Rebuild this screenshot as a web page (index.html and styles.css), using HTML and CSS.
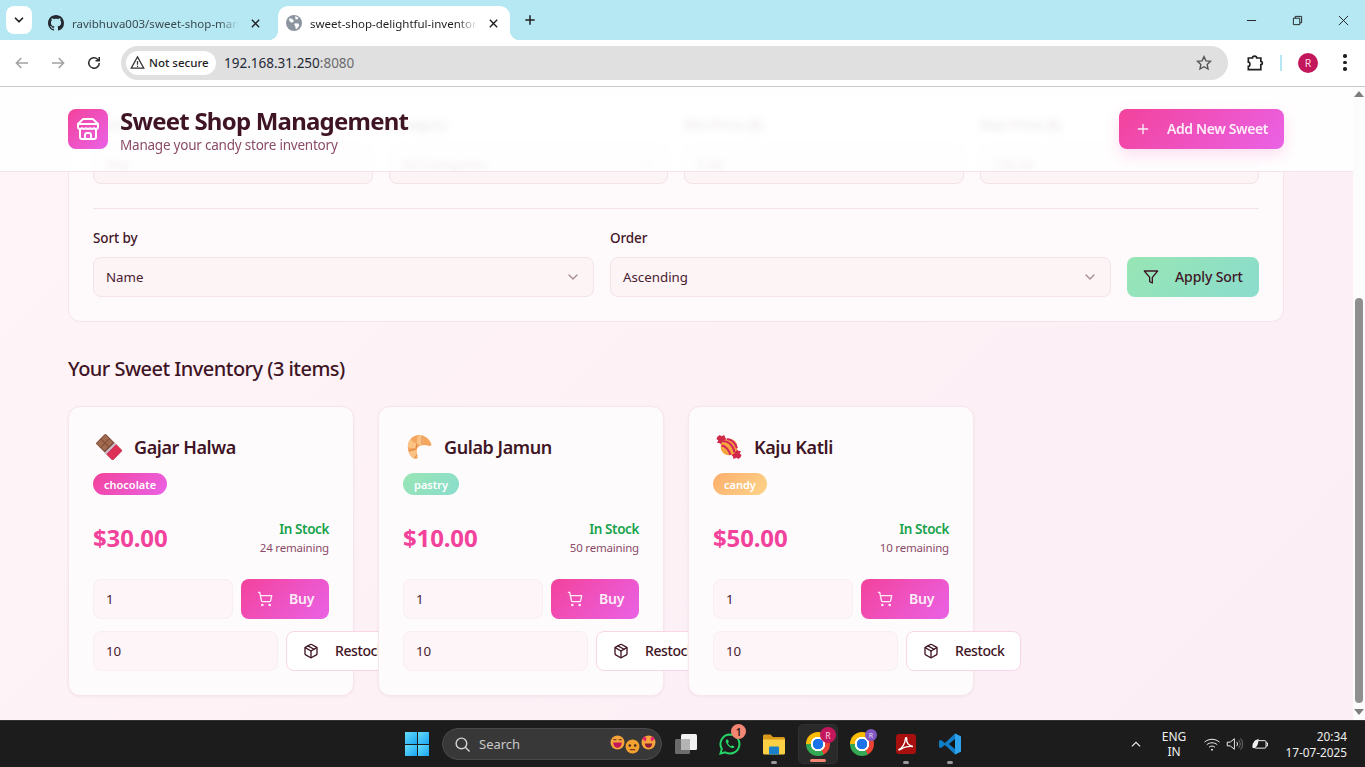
FILE: index.html
```html
<!DOCTYPE html>
<html lang="en">
<head>
<meta charset="utf-8">
<title>Sweet Shop Management</title>
<link rel="stylesheet" href="styles.css">
</head>
<body>
<svg class="defs" width="0" height="0" aria-hidden="true">
  <symbol id="i-plus" viewBox="0 0 24 24"><path d="M5 12h14M12 5v14"/></symbol>
  <symbol id="i-chev" viewBox="0 0 24 24"><path d="m6 9 6 6 6-6"/></symbol>
  <symbol id="i-filter" viewBox="0 0 24 24"><path d="M22 3H2l8 9.460V19l4 2v-8.540z"/></symbol>
  <symbol id="i-cart" viewBox="0 0 24 24"><circle cx="8" cy="21" r="1"/><circle cx="19" cy="21" r="1"/><path d="M2.050 2.050h2l2.660 12.420a2 2 0 0 0 2 1.580h9.780a2 2 0 0 0 1.950-1.570l1.650-7.430H5.120"/></symbol>
  <symbol id="i-box" viewBox="0 0 24 24"><path d="M11 21.730a2 2 0 0 0 2 0l7-4A2 2 0 0 0 21 16V8a2 2 0 0 0-1-1.730l-7-4a2 2 0 0 0-2 0l-7 4A2 2 0 0 0 3 8v8a2 2 0 0 0 1 1.730z"/><path d="M12 22V12"/><path d="m3.300 7 8.700 5 8.700-5"/><path d="m7.500 4.270 9 5.150"/></symbol>
  <symbol id="i-close" viewBox="0 0 12 12"><path d="M2 2l8 8M10 2l-8 8"/></symbol>
</svg>

<div class="screen">
  <header class="tabstrip">
    <button class="tabmenu"><svg class="ico10 stroke-dark" viewBox="0 0 24 24"><use href="#i-chev"/></svg></button>
    <div class="tab first">
      <svg class="fav" viewBox="0 0 16 16"><path fill="#24292f" d="M8 0C3.580 0 0 3.580 0 8c0 3.540 2.290 6.530 5.470 7.590.4.070.55-.17.55-.38 0-.19-.01-.82-.01-1.490-2.010.37-2.530-.49-2.690-.94-.09-.23-.48-.94-.82-1.130-.28-.15-.68-.52-.01-.53.63-.01 1.080.58 1.230.82.72 1.210 1.870.87 2.330.66.07-.52.28-.87.51-1.070-1.780-.2-3.640-.89-3.640-3.950 0-.87.31-1.590.82-2.150-.08-.2-.36-1.020.08-2.120 0 0 .67-.21 2.200.82.64-.18 1.320-.27 2-.27.68 0 1.360.09 2 .27 1.530-1.040 2.200-.82 2.200-.82.44 1.100.16 1.920.08 2.120.51.56.82 1.270.82 2.150 0 3.070-1.870 3.750-3.650 3.950.29.25.54.73.54 1.480 0 1.070-.01 1.930-.01 2.200 0 .21.15.46.55.38A8.013 8.013 0 0016 8c0-4.420-3.580-8-8-8z"/></svg>
      <span class="tabtext">ravibhuva003/sweet-shop-management</span>
      <svg class="tabx" viewBox="0 0 12 12"><use href="#i-close"/></svg>
    </div>
    <div class="tab active">
      <svg class="fav" viewBox="0 0 16 16"><circle cx="8" cy="8" r="8" fill="#8c959f"/><path fill="#fff" d="M3 3.200l3 .6 1.800 1.800-.6 1.600-2 .4L3.400 6zM9 1.200l3.400 1.400-.8 1.600-2 .2zM9 8.200l3.600.4.6 2.200-2.400 3.200-1.200-.4-.4-2.600-1-1.400z"/></svg>
      <span class="tabtext">sweet-shop-delightful-inventory</span>
      <svg class="tabx" viewBox="0 0 12 12"><use href="#i-close"/></svg>
    </div>
    <svg class="newtab" viewBox="0 0 24 24"><use href="#i-plus"/></svg>
    <div class="winctl">
      <svg class="wc" viewBox="0 0 12 12"><path d="M1 6h10"/></svg>
      <svg class="wc" viewBox="0 0 12 12"><path d="M1.500 3.500h7v7h-7zM3.500 3.500v-2h7v7h-2"/></svg>
      <svg class="wc" viewBox="0 0 12 12"><path d="M1 1l10 10M11 1L1 11"/></svg>
    </div>
  </header>

  <nav class="toolbar">
    <svg class="tb dim" viewBox="0 0 24 24"><path d="M20 12H5M11 5.500L4.500 12l6.500 6.500"/></svg>
    <svg class="tb dim" viewBox="0 0 24 24"><path d="M4 12h15M13 5.500l6.500 6.500-6.500 6.500"/></svg>
    <svg class="tb" viewBox="0 0 24 24"><path d="M19 12a7 7 0 1 1-2.200-5.100L19 9M19 4v5h-5"/></svg>
    <div class="omnibox">
      <div class="chip">
        <svg class="warn" viewBox="0 0 16 16"><path d="M8 2L1.300 14h13.400z"/><path d="M8 6.500v4M8 11.500v1.200"/></svg>
        <span>Not secure</span>
      </div>
      <span class="url">192.168.31.250<span class="port">:8080</span></span>
      <svg class="star" viewBox="0 0 24 24"><path d="M12 3.500l2.600 5.600 6.100.7-4.500 4.200 1.200 6-5.400-3-5.400 3 1.200-6-4.500-4.200 6.100-.7z"/></svg>
    </div>
    <svg class="ext" viewBox="0 0 24 24"><path d="M5 6h4c0-3 5-3 5 0h5v4c2.500 0 2.500 4 0 4v6H4v-4c2.500 0 2.500-5 0-5V6z"/></svg>
    <span class="tbsep"></span>
    <span class="avatar">R</span>
    <span class="dots"><i></i><i></i><i></i></span>
  </nav>

  <div class="browser">
    <main class="viewport">
      <div class="topbar">
        <div class="brand">
          <span class="logo">
            <svg viewBox="0 0 24 24"><path d="m2 7 4.410-4.410A2 2 0 0 1 7.830 2h8.340a2 2 0 0 1 1.420.590L22 7"/><path d="M4 12v8a2 2 0 0 0 2 2h12a2 2 0 0 0 2-2v-8"/><path d="M15 22v-4a2 2 0 0 0-2-2h-2a2 2 0 0 0-2 2v4"/><path d="M2 7h20"/><path d="M22 7v3a2 2 0 0 1-2 2 2.700 2.700 0 0 1-1.590-.630.700.700 0 0 0-.820 0A2.700 2.700 0 0 1 16 12a2.700 2.700 0 0 1-1.590-.630.700.700 0 0 0-.820 0A2.700 2.700 0 0 1 12 12a2.700 2.700 0 0 1-1.590-.630.700.700 0 0 0-.820 0A2.700 2.700 0 0 1 8 12a2.700 2.700 0 0 1-1.590-.630.700.700 0 0 0-.820 0A2.700 2.700 0 0 1 4 12a2 2 0 0 1-2-2V7"/></svg>
          </span>
          <div class="brandtext">
            <h1>Sweet Shop Management</h1>
            <p>Manage your candy store inventory</p>
          </div>
        </div>
        <button class="btn btn-pink btn-add"><svg class="ico"><use href="#i-plus"/></svg><span>Add New Sweet</span></button>
      </div>

      <div class="content">
        <section class="panel">
          <div class="filters">
            <div class="field"><label>Name</label><div class="control">Any</div></div>
            <div class="field"><label>Category</label><div class="control select"><span>All Categories</span><svg class="ico chev"><use href="#i-chev"/></svg></div></div>
            <div class="field"><label>Min Price ($)</label><div class="control">0.00</div></div>
            <div class="field"><label>Max Price ($)</label><div class="control">100.00</div></div>
          </div>
          <div class="sortrow">
            <div class="field"><label>Sort by</label><div class="control select"><span>Name</span><svg class="ico chev"><use href="#i-chev"/></svg></div></div>
            <div class="field"><label>Order</label><div class="control select"><span>Ascending</span><svg class="ico chev"><use href="#i-chev"/></svg></div></div>
            <button class="btn btn-mint"><svg class="ico"><use href="#i-filter"/></svg><span>Apply Sort</span></button>
          </div>
        </section>

        <h2 class="section-title">Your Sweet Inventory (3 items)</h2>

        <div class="cards">
          <article class="card">
            <div class="card-head">
              <svg class="emoji" viewBox="0 0 28 28"><g transform="rotate(-45 14 14)"><rect x="6.500" y="1" width="15" height="26" rx="1.500" fill="#7d4a35"/><path d="M7.500 2h6v5.500h-6zM14.500 2h6v5.500h-6zM7.500 8.500h6v5h-6zM14.500 8.500h6v5h-6z" fill="#a06a50"/><rect x="6.500" y="15" width="15" height="2.500" fill="#cdbfd0"/><path d="M6.500 17.500h15v8a1.500 1.500 0 0 1-1.500 1.500H8a1.500 1.500 0 0 1-1.500-1.500z" fill="#de2f57"/></g></svg>
              <h3>Gajar Halwa</h3>
            </div>
            <span class="badge badge-pink">chocolate</span>
            <div class="pricerow">
              <span class="price">$30.00</span>
              <div class="stock"><strong>In Stock</strong><small>24 remaining</small></div>
            </div>
            <div class="action"><input class="qty qty-buy" value="1"><button class="btn btn-pink btn-buy"><svg class="ico"><use href="#i-cart"/></svg><span>Buy</span></button></div>
            <div class="action"><input class="qty qty-re" value="10"><button class="btn btn-outline"><svg class="ico"><use href="#i-box"/></svg><span>Restock</span></button></div>
          </article>

          <article class="card">
            <div class="card-head">
              <svg class="emoji" viewBox="0 0 28 28"><path d="M14 1C7 1 2 7 2 14c0 6 3 11 8 13 2 0 3-1 2.500-3-1.500-4-1.500-8 .5-10 2-2 7-3 12-1 2 0 3-1 2-3C25 5 20 1 14 1z" fill="#f4a55e"/><path d="M14 1c-2 2-3 6-2 10l5 1c2-3 2-7 1-10-1.300-.7-2.700-1-4-1zM4.500 6C2.500 8.500 2 11.500 2 14.500l8 1 1-5zM3 19c1 3.500 3.500 6.500 7 8l2-4-1.500-5.500z" fill="#fbc383"/><path d="M11.500 10.500L11 15.500M17.500 2l-.5 9M3 18l7.500-2M9 26l3-4" stroke="#d9824a" stroke-width=".9" fill="none"/></svg>
              <h3>Gulab Jamun</h3>
            </div>
            <span class="badge badge-mint">pastry</span>
            <div class="pricerow">
              <span class="price">$10.00</span>
              <div class="stock"><strong>In Stock</strong><small>50 remaining</small></div>
            </div>
            <div class="action"><input class="qty qty-buy" value="1"><button class="btn btn-pink btn-buy"><svg class="ico"><use href="#i-cart"/></svg><span>Buy</span></button></div>
            <div class="action"><input class="qty qty-re" value="10"><button class="btn btn-outline"><svg class="ico"><use href="#i-box"/></svg><span>Restock</span></button></div>
          </article>

          <article class="card">
            <div class="card-head">
              <svg class="emoji" viewBox="0 0 28 28"><path d="M1.500 3L4 1l2 1.500L9 1l1 3 3 3-6 6-3-3-3-.5L2.500 7 .5 5.500zM26.500 25l-2.500 2-2-1.500-3 1.500-1-3-3-3 6-6 3 3 3 .5-1.500 2.500 2 1.500z" fill="#cf2a4a"/><circle cx="14" cy="14" r="9" fill="#f5a53c"/><path d="M7.500 8c5-1 11 4 12.500 12M6 12.500c4 0 8 4.500 9.500 10M12 5.300c5 .5 9.500 5 10.500 10" stroke="#d4245e" stroke-width="2.200" fill="none"/></svg>
              <h3>Kaju Katli</h3>
            </div>
            <span class="badge badge-orange">candy</span>
            <div class="pricerow">
              <span class="price">$50.00</span>
              <div class="stock"><strong>In Stock</strong><small>10 remaining</small></div>
            </div>
            <div class="action"><input class="qty qty-buy" value="1"><button class="btn btn-pink btn-buy"><svg class="ico"><use href="#i-cart"/></svg><span>Buy</span></button></div>
            <div class="action"><input class="qty qty-re" value="10"><button class="btn btn-outline"><svg class="ico"><use href="#i-box"/></svg><span>Restock</span></button></div>
          </article>
        </div>
      </div>
    </main>
    <aside class="scrollbar">
      <span class="arrow up"></span>
      <span class="thumb"></span>
      <span class="arrow down"></span>
    </aside>
  </div>

  <footer class="taskbar">
    <div class="tb-center">
      <span class="tb-item"><span class="winlogo"><i></i><i></i><i></i><i></i></span></span>
      <div class="search">
        <svg class="searchico" viewBox="0 0 24 24"><circle cx="10.500" cy="10.500" r="7.500"/><path d="M16 16l6 6"/></svg>
        <span>Search</span>
        <span class="faces">
          <svg class="face" viewBox="0 0 14 14"><circle cx="7" cy="7" r="6.500" fill="#f7a53b"/><path d="M3 7h8c0 3-2 5-4 5s-4-2-4-5z" fill="#c2185b"/><path d="M3 4.500h3M8 4.500h3" stroke="#5b2a1c"/></svg>
          <svg class="face low" viewBox="0 0 14 14"><circle cx="7" cy="7" r="6.500" fill="#f4a12f"/><circle cx="4.500" cy="6" r="1.200" fill="#3c2a20"/><circle cx="9.500" cy="6" r="1.200" fill="#3c2a20"/><path d="M4.500 10h5" stroke="#5b2a1c"/></svg>
          <svg class="face" viewBox="0 0 14 14"><circle cx="7" cy="7" r="6.500" fill="#f7a53b"/><path d="M1.500 3c1-2 3-1.500 3.500 0 .5 1-1 3-1 3S2 5 1.500 3zM12.500 3c-1-2-3-1.500-3.500 0-.5 1 1 3 1 3s2-1 2.500-3z" fill="#e8246c"/><path d="M3.500 8h7c0 2.500-2 4-3.500 4s-3.500-1.500-3.500-4z" fill="#8c1d3b"/></svg>
        </span>
      </div>
      <span class="tb-item">
        <svg class="appico" viewBox="0 0 24 24"><rect x="1" y="7" width="15" height="15" rx="1.500" fill="#6b6b6b"/><rect x="7" y="2" width="16" height="16" rx="1.500" fill="#f2f2f2"/><rect x="7" y="7" width="9" height="11" fill="#b4b4b4"/></svg>
      </span>
      <span class="tb-item">
        <svg class="appico" viewBox="0 0 24 24"><path d="M12 2.500a9.500 9.500 0 0 0-8.200 14.300L2.500 21.500l4.800-1.200A9.500 9.500 0 1 0 12 2.500z" fill="none" stroke="#25d366" stroke-width="2"/><path d="M8.500 7.500c-1 1-1 2.500.5 4.700 1.500 2.300 3.500 3.800 5.500 4 1 0 2-.7 2-1.700l-2.300-1.300-1 1c-1.500-.6-2.800-2-3.300-3.300l1-1-1-2.400z" fill="#25d366"/></svg>
        <span class="notif">1</span>
      </span>
      <span class="tb-item running">
        <svg class="appico" viewBox="0 0 24 24"><path d="M1 4a1.500 1.500 0 0 1 1.500-1.500h6L11 5h10.500A1.500 1.500 0 0 1 23 6.500V10H1z" fill="#d99a1c"/><path d="M1 7.500h22V21a1.500 1.500 0 0 1-1.500 1.500h-19A1.500 1.500 0 0 1 1 21z" fill="#fbd045"/><rect x="7" y="14.500" width="10" height="8" rx="1" fill="#1b7fc9"/></svg>
      </span>
      <span class="tb-item current">
        <span class="chrome"></span>
        <span class="pbadge red">R</span>
      </span>
      <span class="tb-item">
        <span class="chrome"></span>
        <span class="pbadge violet">R</span>
      </span>
      <span class="tb-item running">
        <svg class="appico" viewBox="0 0 24 24"><rect x="2" y="2" width="20" height="20" rx="3" fill="#a80f0f"/><path d="M5 17.500c3-1 6-5.500 6.500-11 .2-1.500 1.500-1 1.200.5-.5 3.500 2 7 6.300 7.500-4-.3-9 .5-12 2.800-1 .7-2.500.8-2 .2z" fill="none" stroke="#fff" stroke-width="1.400"/></svg>
      </span>
      <span class="tb-item running">
        <svg class="appico" viewBox="0 0 24 24"><path d="M17 1.500L23 4.400v15.200L17 22.500 7 13l-4.200 3.200L1 15V9l1.800-1.200L7 11z" fill="#0f7cc4"/><path d="M17 1.500L23 4.400v15.200L17 22.500z" fill="#2ea2ea"/><path d="M17 7l-6 5 6 5z" fill="#141414"/></svg>
      </span>
    </div>
    <div class="tray">
      <svg class="caret" viewBox="0 0 24 24"><path d="M5 16l7-7 7 7"/></svg>
      <div class="lang"><span>ENG</span><span>IN</span></div>
      <svg class="trayico" viewBox="0 0 24 24"><path d="M2 9.500c5.500-5 14.500-5 20 0M5 13c3.800-3.500 10.200-3.500 14 0M8 16.300c2.200-2 5.800-2 8 0"/><circle class="fillw" cx="12" cy="19.500" r="1.300"/></svg>
      <svg class="trayico vol" viewBox="0 0 24 24"><path d="M3 9.500h4L12.500 5v14L7 14.500H3z"/><path d="M15.500 9c1.500 1.500 1.500 4.500 0 6"/><path class="faded" d="M18 6.500c3 3 3 8 0 11M20.500 4.500c4 4 4 11 0 15"/></svg>
      <svg class="trayico" viewBox="0 0 24 24"><rect x="5" y="7.500" width="15" height="10" rx="1.500"/><path d="M20 10.500h2v4h-2"/><path class="fillw" d="M2 17C1 11 5 7 10 5c0 5-1 11-6 12.500z"/></svg>
      <div class="clock"><span>20:34</span><span>17-07-2025</span></div>
    </div>
  </footer>
</div>
</body>
</html>
```
FILE: styles.css
```css
* { box-sizing: border-box; }
html, body { margin: 0; padding: 0; height: 100%; overflow: hidden; }
body { font-family: "Noto Sans", "Open Sans", sans-serif; color: #3f1525; }
.defs { position: absolute; }
h1, h2, h3, p { margin: 0; }
button { font: inherit; border: 0; padding: 0; }

.screen { width: 1365px; height: 767px; display: flex; flex-direction: column; }

/* Browser tab strip */
.tabstrip { height: 40px; background: #b5e8f3; display: flex; align-items: flex-start; flex: none; }
.tabmenu { width: 26px; height: 28px; margin: 6px 0 0 6px; background: #fff; border-radius: 8px; display: flex; align-items: center; justify-content: center; }
.ico10 { width: 14px; height: 14px; fill: none; stroke-width: 3; stroke-linecap: round; stroke-linejoin: round; }
.stroke-dark { stroke: #1f1f1f; }
.tab { height: 34px; margin-top: 6px; display: flex; align-items: center; font-size: 11.500px; color: #3b4a50; position: relative; }
.tab.first { width: 246px; padding: 0 17px 0 16px; }
.tab.active { width: 232px; padding: 0 11px 0 8px; background: #fff; border-radius: 10px 10px 0 0; color: #1f1f1f; }
.tab.active::before, .tab.active::after { content: ""; position: absolute; bottom: 0; width: 10px; height: 10px; }
.tab.active::before { left: -10px; background: radial-gradient(circle at 0 0, transparent 10px, #fff 10.500px); }
.tab.active::after { right: -10px; background: radial-gradient(circle at 100% 0, transparent 10px, #fff 10.500px); }
.fav { width: 16px; height: 16px; flex: none; margin-right: 8px; }
.tabtext { flex: 1; min-width: 0; overflow: hidden; white-space: nowrap; -webkit-mask-image: linear-gradient(90deg, #000 88%, transparent 100%); mask-image: linear-gradient(90deg, #000 88%, transparent 100%); }
.tabx { width: 11px; height: 11px; flex: none; margin-left: 11px; fill: none; stroke: #1f1f1f; stroke-width: 1.500; }
.newtab { width: 16px; height: 16px; margin: 12px 0 0 12px; fill: none; stroke: #1f1f1f; stroke-width: 2.200; }
.winctl { margin-left: auto; display: flex; height: 40px; align-items: center; padding-right: 16px; gap: 35px; }
.wc { width: 11px; height: 11px; fill: none; stroke: #1a1a1a; stroke-width: 1; }

/* Browser toolbar */
.toolbar { height: 47px; background: #fff; border-bottom: 1px solid #c9c9c9; border-radius: 8px 8px 0 0; display: flex; align-items: center; padding: 0 0 1px 13px; flex: none; }
.tb { width: 18px; height: 18px; margin-right: 18px; fill: none; stroke: #2c2c2c; stroke-width: 2; flex: none; }
.tb.dim { stroke: #a3a3a3; }
.omnibox { width: 1107px; height: 34px; background: #e0e0e0; border-radius: 17px; display: flex; align-items: center; padding: 0 15px 0 5px; flex: none; }
.chip { width: 90px; height: 24px; background: #fff; border-radius: 12px; display: flex; align-items: center; padding-left: 4px; font-size: 11.500px; font-weight: 500; color: #1f1f1f; white-space: nowrap; }
.warn { width: 15px; height: 15px; margin-right: 4px; fill: none; stroke: #333; stroke-width: 1.300; flex: none; }
.url { margin-left: 8px; font-size: 13.500px; color: #1f2937; }
.port { color: #6b6b6b; }
.star { width: 18px; height: 18px; margin-left: auto; fill: none; stroke: #555; stroke-width: 1.800; }
.ext { width: 20px; height: 20px; margin-left: 17px; fill: none; stroke: #1f1f1f; stroke-width: 2; flex: none; }
.tbsep { width: 2px; height: 16px; margin-left: 15px; background: #b5e8f3; flex: none; }
.avatar { width: 20px; height: 20px; margin-left: 16px; border-radius: 50%; background: #c2185b; color: #fbd6e2; font-size: 10.500px; display: flex; align-items: center; justify-content: center; flex: none; }
.dots { margin-left: 25px; display: flex; flex-direction: column; gap: 3px; flex: none; }
.dots i { width: 3.500px; height: 3.500px; background: #1f1f1f; border-radius: 50%; display: block; }

/* Page area */
.browser { height: 633px; display: flex; flex: none; }
.viewport { width: 1353px; height: 633px; position: relative; overflow: hidden; background: linear-gradient(135deg, #fff5f8 0%, #fdf1f6 50%, #fbeef5 100%); }
.topbar { position: absolute; z-index: 5; top: 0; left: 0; right: 0; height: 85px; padding: 22px 69px 0 68px; display: flex; justify-content: space-between; align-items: flex-start; background: rgba(255, 255, 255, .9); border-bottom: 1px solid #f3e3ea; -webkit-backdrop-filter: blur(3px); backdrop-filter: blur(3px); }
.brand { display: flex; gap: 12px; }
.logo { width: 40px; height: 40px; border-radius: 8px; background: linear-gradient(135deg, #f3429b, #ea62e6); display: flex; align-items: center; justify-content: center; }
.logo svg { width: 24px; height: 24px; fill: none; stroke: #fff; stroke-width: 2; stroke-linecap: round; stroke-linejoin: round; }
.brandtext h1 { font-size: 24px; line-height: 24px; font-weight: 700; color: #3f1525; letter-spacing: -.78px; white-space: nowrap; }
.brandtext p { font-size: 13.500px; line-height: 20px; margin-top: 2px; color: #8a4b68; letter-spacing: -.22px; white-space: nowrap; }

.btn { height: 40px; border-radius: 8px; display: inline-flex; align-items: center; gap: 16px; padding: 0 16px; font-size: 14px; font-weight: 600; white-space: nowrap; flex: none; }
.btn span { margin-top: -2px; }
.ico { width: 16px; height: 16px; fill: none; stroke: currentColor; stroke-width: 2; stroke-linecap: round; stroke-linejoin: round; flex: none; }
.btn-pink { background: linear-gradient(135deg, #f3429b, #ea62e6); color: #fdeef8; }
.btn-add { width: 165px; box-shadow: 0 6px 16px rgba(240, 70, 170, .18); letter-spacing: -.4px; }
.btn-mint { width: 132px; background: linear-gradient(135deg, #98e6b4, #8adccd); color: #3f1525; font-weight: 500; letter-spacing: -.1px; }
.btn-buy { width: 88px; letter-spacing: -.2px; }
.btn-outline { width: 115px; height: 40px; background: #fff; border: 1px solid #f9d5e8; color: #3f1525; font-weight: 500; letter-spacing: -.4px; }

/* Content */
.content { padding: 4px 69px 0 68px; }
.panel { height: 231px; padding: 24px; background: #fef9fb; border: 1px solid #f5e4ea; border-radius: 12px; }
.filters { display: grid; grid-template-columns: repeat(4, minmax(0, 1fr)); gap: 16px; }
.field label { display: block; font-size: 13.500px; line-height: 19px; font-weight: 500; margin-bottom: 9px; color: #3f1525; letter-spacing: -.1px; }
.control { height: 40px; padding: 0 12px; background: #fdf4f6; border: 1px solid #f4e3e9; border-radius: 8px; font-size: 13.300px; color: #4a2030; display: flex; align-items: center; justify-content: space-between; }
.chev { color: #a58a96; }
.sortrow { display: grid; grid-template-columns: 1fr 1fr 132px; gap: 16px; align-items: end; margin-top: 24px; padding-top: 20px; border-top: 1px solid #f3e3e9; }

.section-title { margin-top: 33px; font-size: 20px; line-height: 28px; font-weight: 500; color: #3f1525; letter-spacing: -.53px; }
.cards { display: grid; grid-template-columns: repeat(4, minmax(0, 1fr)); gap: 24px; margin-top: 23px; }
.card { height: 290px; padding: 24px; background: #fefbfd; border: 1px solid #f7e6ed; border-radius: 12px; isolation: isolate; box-shadow: 0 1px 3px rgba(120, 40, 80, .06); }
.card-head { display: flex; align-items: center; gap: 12px; height: 32px; padding-left: 3px; }
.emoji { width: 26px; height: 26px; flex: none; }
.card-head h3 { font-size: 18px; line-height: 28px; font-weight: 600; color: #3f1525; letter-spacing: -.42px; }
.badge { display: inline-flex; align-items: center; height: 22px; margin-top: 10px; padding: 0 11px; border-radius: 11px; color: #fff; font-size: 11px; font-weight: 600; }
.badge-pink { background: linear-gradient(135deg, #f3429b, #ea62e6); }
.badge-mint { background: linear-gradient(135deg, #98e6b4, #8adccd); }
.badge-orange { background: linear-gradient(135deg, #fcae6c, #fcd488); }
.pricerow { display: flex; justify-content: space-between; align-items: center; margin-top: 24px; }
.price { font-size: 24px; line-height: 32px; font-weight: 700; color: #f3429b; letter-spacing: -.15px; }
.stock { display: flex; flex-direction: column; align-items: flex-end; padding-top: 1px; }
.stock strong { font-size: 13.500px; line-height: 19px; font-weight: 600; color: #16a34a; letter-spacing: -.4px; }
.stock small { font-size: 11.500px; line-height: 18px; color: #8a4b68; letter-spacing: -.2px; }
.action { display: flex; gap: 8px; margin-top: 12px; }
.pricerow + .action { margin-top: 22px; }
.qty { height: 40px; min-width: 0; padding: 0 12px; border: 1px solid #f9eef1; border-radius: 8px; background: #fdf5f7; font: inherit; font-size: 13.300px; color: #4a2030; outline: none; }
.qty-buy { width: 140px; flex: none; }
.qty-re { width: 185px; flex: none; }

/* Scrollbar */
.scrollbar { width: 12px; height: 633px; background: #fdfcfd; display: flex; flex-direction: column; align-items: center; flex: none; padding-top: 4px; }
.arrow { width: 0; height: 0; border-left: 5px solid transparent; border-right: 5px solid transparent; flex: none; }
.arrow.up { border-bottom: 6px solid #7e7e7e; }
.arrow.down { border-top: 6px solid #7e7e7e; margin-top: 6px; }
.thumb { width: 8px; height: 405px; margin-top: 201px; background: #8f8f8f; border-radius: 4px; flex: none; }

/* Taskbar */
.taskbar { height: 47px; background: #1c1c1c; border-top: 1px solid #333; display: flex; align-items: center; flex: none; color: #f0f0f0; padding-left: 395px; }
.tb-center { display: flex; align-items: center; height: 46px; }
.tb-item { width: 44px; height: 40px; display: flex; align-items: center; justify-content: center; position: relative; flex: none; }
.winlogo { width: 24px; height: 24px; display: grid; grid-template-columns: 1fr 1fr; gap: 1px; }
.winlogo i { display: block; background: linear-gradient(135deg, #66dcfb, #1aa5f2); }
.search { width: 220px; height: 32px; margin: 0 2px 0 3px; background: #383838; border: 1px solid #4a4a4a; border-radius: 16px; display: flex; align-items: center; padding-left: 11px; font-size: 13px; color: #c9c9c9; flex: none; }
.searchico { width: 17px; height: 17px; margin-right: 8px; fill: none; stroke: #d5d5d5; stroke-width: 2; }
.faces { margin-left: auto; margin-right: 5px; display: flex; }
.face { width: 15px; height: 15px; }
.face.low { margin: 4px 1px 0 0; }
.appico { width: 24px; height: 24px; }
.notif { position: absolute; top: 0; right: 6px; width: 15px; height: 15px; border-radius: 50%; background: #f28672; color: #2a1512; font-size: 10px; font-weight: 600; display: flex; align-items: center; justify-content: center; }
.running::after { content: ""; position: absolute; bottom: 0; left: 19px; width: 6px; height: 3px; border-radius: 2px; background: #9a9a9a; }
.current { width: 40px; margin: 0 2px; background: #2a2a2a; border-radius: 5px; border: 1px solid #303030; }
.current::after { content: ""; position: absolute; bottom: 1px; left: 11px; width: 16px; height: 3px; border-radius: 2px; background: #f28672; }
.chrome { width: 24px; height: 24px; border-radius: 50%; background: radial-gradient(circle, #1a73e8 0 5px, #fff 5.500px 7px, transparent 7.500px), conic-gradient(from 30deg, #ea4335 0 120deg, #34a853 120deg 240deg, #fbbc04 240deg 360deg); }
.pbadge { position: absolute; top: 2px; right: 4px; width: 16px; height: 16px; border-radius: 50%; font-size: 8.500px; display: flex; align-items: center; justify-content: center; color: #fbd6e2; }
.pbadge.red { background: #c2185b; right: 1px; }
.pbadge.violet { background: #7e57c2; width: 12px; height: 12px; font-size: 7px; right: 7px; top: 5px; color: #e5dcf7; }

.tray { margin-left: 157px; display: flex; align-items: center; flex: none; height: 46px; }
.caret { width: 14px; height: 14px; fill: none; stroke: #f0f0f0; stroke-width: 2; flex: none; }
.lang { width: 38px; margin: 0 10px 0 12px; display: flex; flex-direction: column; align-items: center; font-size: 12px; line-height: 15px; color: #f0f0f0; }
.trayico { width: 18px; height: 18px; margin-right: 4px; fill: none; stroke: #f0f0f0; stroke-width: 1.300; flex: none; }
.trayico.vol { margin-right: 8px; }
.trayico .faded { stroke: #777; }
.trayico .fillw { fill: #f0f0f0; stroke: none; }
.clock { width: 66px; margin-left: 8px; display: flex; flex-direction: column; align-items: flex-end; font-size: 11.800px; line-height: 16px; color: #f0f0f0; white-space: nowrap; }
```
